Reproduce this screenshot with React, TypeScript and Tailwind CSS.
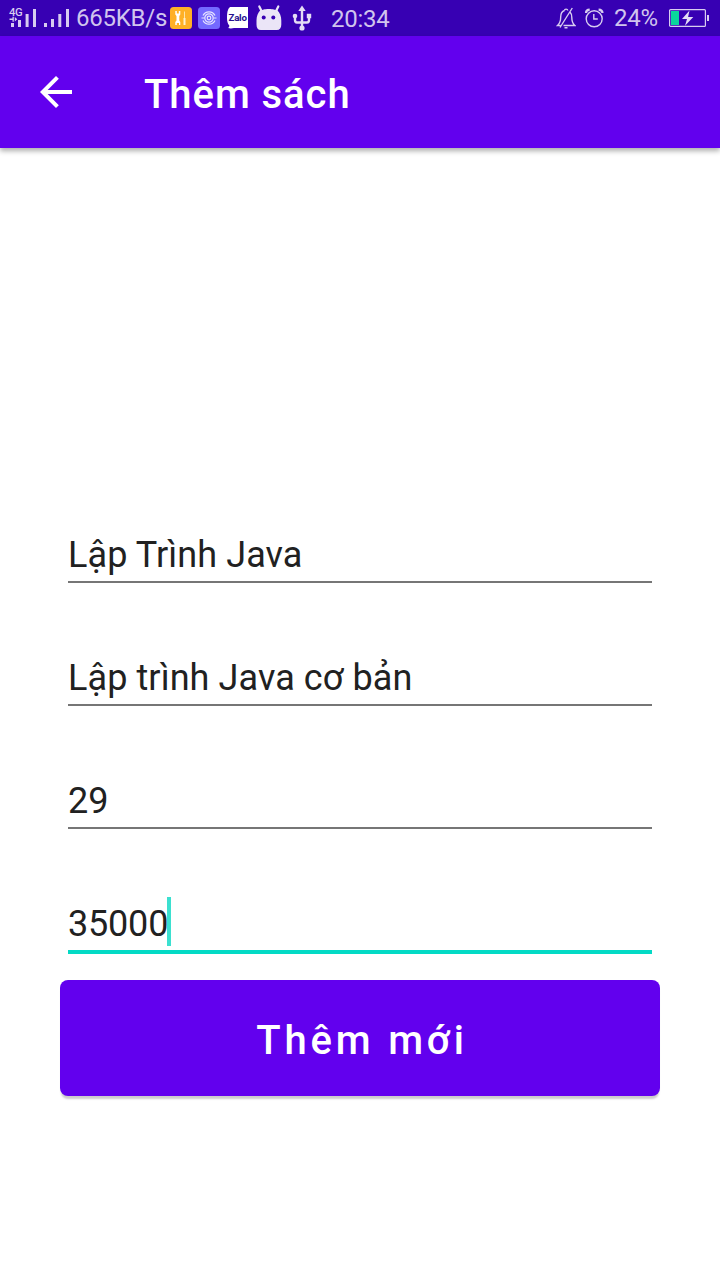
import React from 'react';

function CellSignal() {
  return (
    <svg className="ml-[9px] h-[36px] w-[61px] shrink-0" viewBox="0 0 61 36" fill="#d7ccf0">
      <text x="0" y="16.300" fontSize="10" fontWeight="500" fontFamily="Roboto, sans-serif" textLength="13.500" lengthAdjust="spacingAndGlyphs">4G</text>
      <path d="M2 23h3v4H2zM9 20h3v7H9zM16.600 14h3v13h-3zM24 9h3v18h-3zM35 23h3v4h-3zM42 19h3v8h-3zM49.300 14h3v13h-3zM57 9h3v18h-3z" />
      <path d="M.5 18.500h3v-1.700h1.300v5H3.500v-1.700h-3zM8.300 19.200l-2.500-2.200v4.400z" />
    </svg>
  );
}

function ToolsBadge() {
  return (
    <svg className="ml-[3px] h-[22px] w-[22px] shrink-0" viewBox="0 0 22 22">
      <rect width="22" height="22" rx="3.500" fill="#ffb026" />
      <path d="M5.300 4h1.500v2.500h2V4h1.500v3.500L9.300 9v4.500l1 1.500v3H9v-2H6.800v2H5.300v-3l1.200-1.500V9L5.300 7.500z" fill="#fff" />
      <path d="M14.500 4.500v7" stroke="#ffe3a8" strokeWidth="1" />
      <path d="M14.500 11v7" stroke="#fff0cc" strokeWidth="2" />
    </svg>
  );
}

function RingsBadge() {
  return (
    <svg className="ml-[6px] h-[22px] w-[22px] shrink-0" viewBox="0 0 22 22">
      <rect width="22" height="22" rx="3.500" fill="#7469ff" />
      <g fill="none" stroke="#e6e3ff" strokeWidth="1.200">
        <path d="M5 8.500a6.700 6.700 0 0 1 12 0M5 13.500a6.700 6.700 0 0 0 12 0M3.500 11h3.200M15.300 11h3.200" />
        <circle cx="11" cy="11" r="4.200" />
        <circle cx="11" cy="11" r="1.800" />
      </g>
    </svg>
  );
}

function ZaloBadge() {
  return (
    <svg className="ml-[7px] h-[22px] w-[21px] shrink-0" viewBox="0 0 21 22">
      <path d="M3 0h18v21H7c-2 .5-4 .6-6 0 1-.6 1.400-1.300 1.300-2.400C.5 16.500 0 14 0 10.500 0 6 .5 2 3 0z" fill="#fff" />
      <text x="1.500" y="13.500" fontSize="9.800" fontWeight="700" fontFamily="Roboto, sans-serif" textLength="18.200" lengthAdjust="spacingAndGlyphs" fill="#26108f">Zalo</text>
    </svg>
  );
}

function DroidHead() {
  return (
    <svg className="ml-[8px] h-[26px] w-[26px] shrink-0" viewBox="0 0 26 26">
      <path d="M3.300 1.500L5.300 5.500M22.300 1.500L20.300 5.500" stroke="#ebe5f7" strokeWidth="2.200" strokeLinecap="round" />
      <path d="M4.500 5C7 5 8 3.900 12.800 3.900S18.600 5 21.100 5C24 7.500 25.300 11.500 25.300 15.500v4c0 3.500-1.500 5.500-4.500 5.500h-16C1.800 25 .5 23 .5 19.500v-4C.5 11.500 1.800 7.500 4.500 5z" fill="#ebe5f7" />
      <circle cx="7.700" cy="12.400" r="2" fill="#3700b3" />
      <circle cx="17.300" cy="12.400" r="2" fill="#3700b3" />
    </svg>
  );
}

function Usb() {
  return (
    <svg className="ml-[10px] h-[27px] w-[20px] shrink-0" viewBox="0 0 20 27">
      <g fill="none" stroke="#e4dcf5" strokeWidth="2.400">
        <path d="M10 5v18M3 10.500v4.500c0 1.500.5 2.500 2 2.500h10c1.500 0 2-1 2-2.500v-4" />
      </g>
      <g fill="#e4dcf5">
        <path d="M10 .5l3.700 5.500H6.300zM14.800 8.800h4.400v4.400h-4.400z" />
        <circle cx="3" cy="11" r="2.300" />
        <circle cx="10" cy="23" r="2.600" />
      </g>
    </svg>
  );
}

function MutedBell() {
  return (
    <svg className="h-[22px] w-[20px] shrink-0" viewBox="0 0 20 22" fill="none" stroke="#d7ccf0" strokeWidth="1.400">
      <path d="M8.500 3.500C5.300 4.500 4.700 7 4.700 10c0 4-.9 6.500-3.200 8.500h3M7.500 18.500h11.300c-2.300-2-3-4.500-3-8 0-2.500-.5-4.200-1.800-5.500M8.500 3.500c0-1.800 3-1.800 3.300 0M16.300 1L4 20.500M8.500 20.800h3" />
    </svg>
  );
}

function Alarm() {
  return (
    <svg className="ml-[8px] h-[20px] w-[20px] shrink-0" viewBox="0 0 20 20" fill="none" stroke="#d7ccf0" strokeWidth="1.400">
      <circle cx="10.200" cy="10.800" r="8" />
      <path d="M9.800 6v5h4" />
      <path d="M2 5C2 3 3.500 1.700 5.700 1.600M18.500 5c-.1-2-1.700-3.300-3.900-3.400" strokeWidth="2.200" />
    </svg>
  );
}

function Battery() {
  return (
    <svg className="ml-[12px] h-[18px] w-[40px] shrink-0" viewBox="0 0 40 18">
      <rect x=".6" y=".6" width="35.800" height="16.800" rx="1" fill="none" stroke="#d7ccf0" strokeWidth="1.200" />
      <path d="M38 6h2v6h-2z" fill="#d7ccf0" />
      <path d="M2 2h8v14H2z" fill="#0ad69c" />
      <path d="M20.500 1.500L13 10h5l-2 6.700L24.300 8h-5.200z" fill="#e4dcf5" />
    </svg>
  );
}

function StatusBar() {
  return (
    <header className="flex h-[36px] shrink-0 items-center bg-[#3700b3] text-[24px] leading-[36px] tracking-[-0.25px] text-[#d0c4ee]">
      <CellSignal />
      <span className="ml-[6px] w-[91px] whitespace-nowrap">665KB/s</span>
      <ToolsBadge />
      <RingsBadge />
      <ZaloBadge />
      <DroidHead />
      <Usb />
      <span className="ml-[19px] pt-[2px]">20:34</span>
      <div className="ml-auto flex items-center pr-[11px]">
        <MutedBell />
        <Alarm />
        <span className="ml-[10px] w-[43px] whitespace-nowrap">24%</span>
        <Battery />
      </div>
    </header>
  );
}

function Field({ value, focused = false }: { value: string; focused?: boolean }) {
  return (
    <div className={focused ? 'flex h-[57px] flex-col border-b-4 border-[#03dac5] tracking-[-0.2px]' : 'mb-[68px] flex h-[55px] flex-col border-b-2 border-[#767676] tracking-[0.09px]'}>
      <div className="flex h-[49px] items-center">
        <span className="whitespace-nowrap pt-[6px] text-[36px] leading-[49px] text-[#212121]">{value}</span>
        {focused && <span className="-ml-px h-[49px] w-[4px] bg-[#3be0d0]" />}
      </div>
    </div>
  );
}

export default function App() {
  return (
    <div className="flex h-[1280px] w-[720px] flex-col overflow-hidden bg-white font-['Roboto',sans-serif]">
      <StatusBar />
      <nav className="flex h-[112px] shrink-0 items-center bg-[#6200ee] text-white shadow-[0_3px_5px_rgba(0,0,0,0.32)]">
        <svg className="ml-[40px] h-[32px] w-[32px]" viewBox="4 4 16 16" fill="#fff">
          <path d="M20 11H7.830l5.590-5.590L12 4l-8 8 8 8 1.410-1.410L7.830 13H20v-2z" />
        </svg>
        <h1 className="ml-[72px] pt-[5px] text-[40px] leading-[48px] font-medium tracking-[0.95px]">Thêm sách</h1>
      </nav>
      <main className="flex flex-col px-[60px] pt-[380px]">
        <div className="px-2">
          <Field value="Lập Trình Java" />
          <Field value="Lập trình Java cơ bản" />
          <Field value="29" />
          <Field value="35000" focused />
        </div>
        <button className="mt-[26px] h-[116px] rounded-[8px] bg-[#6200ee] pt-[6px] pl-[4px] text-[40px] font-medium tracking-[3.8px] text-white shadow-[0_4px_2px_-1px_rgba(0,0,0,0.2)]">
          Thêm mới
        </button>
      </main>
    </div>
  );
}
